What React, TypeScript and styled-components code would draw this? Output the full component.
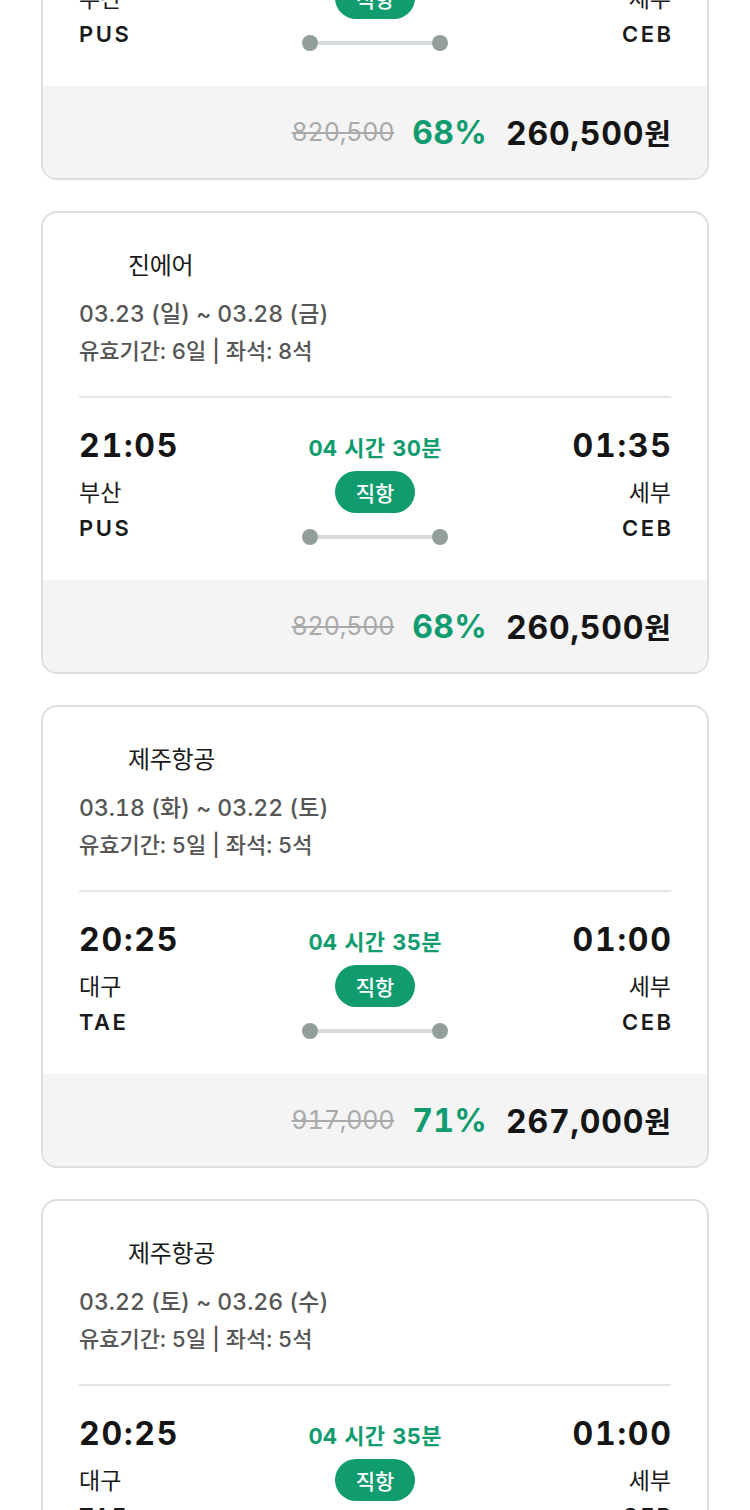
import React from "react";
import styled, { createGlobalStyle } from "styled-components";

const GlobalStyle = createGlobalStyle`
  html, body {
    margin: 0;
    padding: 0;
    background: #ffffff;
  }
  body {
    font-family: Inter, "Noto Sans CJK KR", "Noto Sans", sans-serif;
    font-variant-numeric: tabular-nums;
    color: #111111;
    overflow: hidden;
  }
`;

const Page = styled.div`
  width: 750px;
  height: 1510px;
  overflow: hidden;
`;

const List = styled.div`
  display: flex;
  flex-direction: column;
  gap: 31px;
  padding: 0 41px;
  margin-top: -283px;
`;

const Card = styled.div`
  border: 2px solid #dedede;
  border-radius: 16px;
  overflow: hidden;
  background: #ffffff;
  display: flex;
  flex-direction: column;
  height: 463px;
  box-sizing: border-box;
`;

const Body = styled.div`
  padding: 32px 36px 0;
  display: flex;
  flex-direction: column;
  flex: 1;
`;

const NameRow = styled.div`
  display: flex;
  align-items: center;
  gap: 10px;
  height: 36px;
`;

const Logo = styled.div`
  width: 39px;
  height: 36px;
`;

const Name = styled.span`
  font-size: 24px;
  color: #1a1a1a;
  letter-spacing: -0.3px;
`;

const DateText = styled.div`
  margin-top: 17px;
  font-size: 23px;
  line-height: 32px;
  color: #565656;
  font-weight: 500;
  letter-spacing: 0;
`;

const Info = styled.div`
  margin-top: 6px;
  font-size: 22px;
  line-height: 30px;
  color: #565656;
  font-weight: 500;
  letter-spacing: 0;
`;

const Divider = styled.div`
  margin-top: 30px;
  height: 2px;
  background: #e6e6e6;
`;

const FlightRow = styled.div`
  margin-top: 28px;
  display: grid;
  grid-template-columns: 1fr auto 1fr;
  align-items: start;
`;

const Side = styled.div<{ $end?: boolean }>`
  display: flex;
  flex-direction: column;
  align-items: ${(p) => (p.$end ? "flex-end" : "flex-start")};
`;

const Time = styled.div`
  font-size: 32px;
  line-height: 40px;
  font-weight: 700;
  letter-spacing: 1.8px;
  margin-right: -1.8px;
  color: #151515;
`;

const City = styled.div`
  margin-top: 12px;
  font-size: 23px;
  line-height: 30px;
  color: #1a1a1a;
`;

const Code = styled.div`
  margin-top: 5px;
  font-size: 22px;
  line-height: 30px;
  font-weight: 600;
  letter-spacing: 2.5px;
  margin-right: -2.5px;
  color: #1a1a1a;
`;

const Center = styled.div`
  display: flex;
  flex-direction: column;
  align-items: center;
  padding-top: 7px;
`;

const Duration = styled.div`
  font-size: 22px;
  line-height: 30px;
  font-weight: 700;
  color: #119c6f;
  letter-spacing: 0.2px;
  word-spacing: 1px;
`;

const Pill = styled.div`
  margin-top: 8px;
  width: 80px;
  height: 42px;
  border-radius: 21px;
  background: #119c6f;
  color: #ffffff;
  font-size: 21px;
  font-weight: 500;
  display: flex;
  align-items: center;
  justify-content: center;
`;

const Track = styled.div`
  margin-top: 16px;
  width: 146px;
  height: 16px;
  display: flex;
  align-items: center;
`;

const Dot = styled.span`
  width: 16px;
  height: 16px;
  border-radius: 50%;
  background: #919e99;
  flex: none;
`;

const Line = styled.span`
  flex: 1;
  height: 4px;
  background: #d5dbd9;
`;

const Footer = styled.div`
  height: 92px;
  background: #f4f4f4;
  display: flex;
  align-items: center;
  justify-content: flex-end;
  padding: 0 36px 0 0;
  flex: none;
`;

const OldPrice = styled.span`
  font-size: 25px;
  color: #aaaaaa;
  text-decoration: line-through;
  text-decoration-thickness: 1.5px;
  letter-spacing: -0.2px;
  margin-right: 18px;
`;

const Rate = styled.span`
  font-size: 32px;
  font-weight: 700;
  color: #119c6f;
  letter-spacing: 0.3px;
  margin-right: 19px;
`;

const Price = styled.span`
  font-size: 32px;
  font-weight: 700;
  color: #151515;
  letter-spacing: 0.8px;
`;

const Won = styled.span`
  font-size: 29px;
  letter-spacing: 0;
`;

type Flight = {
  airline: string;
  dates: string;
  days: number;
  seats: number;
  dep: string;
  arr: string;
  duration: string;
  from: string;
  fromCode: string;
  to: string;
  toCode: string;
  old: string;
  rate: string;
  price: string;
};

const flights: Flight[] = [
  {
    airline: "진에어",
    dates: "03.16 (일) ~ 03.21 (금)",
    days: 6,
    seats: 8,
    dep: "21:05",
    arr: "01:35",
    duration: "04 시간 30분",
    from: "부산",
    fromCode: "PUS",
    to: "세부",
    toCode: "CEB",
    old: "820,500",
    rate: "68%",
    price: "260,500",
  },
  {
    airline: "진에어",
    dates: "03.23 (일) ~ 03.28 (금)",
    days: 6,
    seats: 8,
    dep: "21:05",
    arr: "01:35",
    duration: "04 시간 30분",
    from: "부산",
    fromCode: "PUS",
    to: "세부",
    toCode: "CEB",
    old: "820,500",
    rate: "68%",
    price: "260,500",
  },
  {
    airline: "제주항공",
    dates: "03.18 (화) ~ 03.22 (토)",
    days: 5,
    seats: 5,
    dep: "20:25",
    arr: "01:00",
    duration: "04 시간 35분",
    from: "대구",
    fromCode: "TAE",
    to: "세부",
    toCode: "CEB",
    old: "917,000",
    rate: "71%",
    price: "267,000",
  },
  {
    airline: "제주항공",
    dates: "03.22 (토) ~ 03.26 (수)",
    days: 5,
    seats: 5,
    dep: "20:25",
    arr: "01:00",
    duration: "04 시간 35분",
    from: "대구",
    fromCode: "TAE",
    to: "세부",
    toCode: "CEB",
    old: "917,000",
    rate: "71%",
    price: "267,000",
  },
];

function FlightCard({ f }: { f: Flight }) {
  return (
    <Card>
      <Body>
        <NameRow>
          <Logo />
          <Name>{f.airline}</Name>
        </NameRow>
        <DateText>{f.dates}</DateText>
        <Info>
          유효기간: {f.days}일 | 좌석: {f.seats}석
        </Info>
        <Divider />
        <FlightRow>
          <Side>
            <Time>{f.dep}</Time>
            <City>{f.from}</City>
            <Code>{f.fromCode}</Code>
          </Side>
          <Center>
            <Duration>{f.duration}</Duration>
            <Pill>직항</Pill>
            <Track>
              <Dot />
              <Line />
              <Dot />
            </Track>
          </Center>
          <Side $end>
            <Time>{f.arr}</Time>
            <City>{f.to}</City>
            <Code>{f.toCode}</Code>
          </Side>
        </FlightRow>
      </Body>
      <Footer>
        <OldPrice>{f.old}</OldPrice>
        <Rate>{f.rate}</Rate>
        <Price>
          {f.price}
          <Won>원</Won>
        </Price>
      </Footer>
    </Card>
  );
}

export default function App() {
  return (
    <Page>
      <GlobalStyle />
      <List>
        {flights.map((f, i) => (
          <FlightCard key={i} f={f} />
        ))}
      </List>
    </Page>
  );
}
